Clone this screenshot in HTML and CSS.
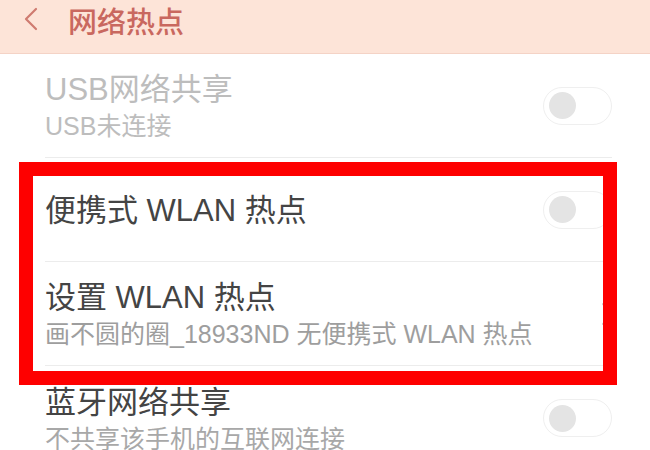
FILE: index.html
```html
<!DOCTYPE html>
<html lang="zh-CN">
<head>
<meta charset="utf-8">
<title>网络热点</title>
<link rel="stylesheet" href="styles.css">
</head>
<body>
<div class="screen">
  <header class="topbar">
    <svg class="back" width="18" height="26" viewBox="0 0 18 26" aria-hidden="true">
      <path d="M14 3 L4 13 L14 23" fill="none" stroke="#cf7b70" stroke-width="2.2" stroke-linecap="round" stroke-linejoin="round"/>
    </svg>
    <h1 class="title">网络热点</h1>
  </header>

  <div class="list">
    <div class="row">
      <div class="text">
        <div class="name disabled">USB网络共享</div>
        <div class="sub disabled">USB未连接</div>
      </div>
      <span class="toggle"><span class="knob"></span></span>
    </div>

    <div class="row">
      <div class="text">
        <div class="name">便携式 WLAN 热点</div>
      </div>
      <span class="toggle"><span class="knob"></span></span>
    </div>

    <div class="row">
      <div class="text">
        <div class="name">设置 WLAN 热点</div>
        <div class="sub">画不圆的圈_18933ND 无便携式 WLAN 热点</div>
      </div>
      <svg class="arrow" width="14" height="26" viewBox="0 0 14 26" aria-hidden="true">
        <path d="M3 3 L12 13 L3 23" fill="none" stroke="#c8c8c8" stroke-width="2" stroke-linecap="round" stroke-linejoin="round"/>
      </svg>
    </div>

    <div class="row last">
      <div class="text">
        <div class="name">蓝牙网络共享</div>
        <div class="sub light">不共享该手机的互联网连接</div>
      </div>
      <span class="toggle"><span class="knob"></span></span>
    </div>
  </div>

  <div class="highlight"></div>
</div>
</body>
</html>
```

FILE: styles.css
```css
* { box-sizing: border-box; }

html, body {
  margin: 0;
  padding: 0;
  background: #ffffff;
}

body {
  font-family: "Liberation Sans", "Noto Sans CJK SC", sans-serif;
  width: 650px;
  height: 450px;
  overflow: hidden;
}

.screen {
  position: relative;
  width: 650px;
  height: 450px;
  overflow: hidden;
}

.topbar {
  height: 54px;
  background: #fde4d8;
  border-bottom: 1px solid #f4d3c6;
  display: flex;
  align-items: flex-start;
  padding-left: 22px;
}

.back {
  margin-top: 6px;
  flex: none;
}

.title {
  margin: 0 0 0 28px;
  font-size: 29px;
  line-height: 40px;
  font-weight: 500;
  color: #c9685f;
  font-family: "Noto Sans CJK SC", sans-serif;
}

.list {
  display: flex;
  flex-direction: column;
}

.row {
  height: 104px;
  margin-left: 45px;
  margin-right: 38px;
  display: flex;
  align-items: center;
  justify-content: space-between;
  border-bottom: 1px solid #ececec;
}

.row.last { border-bottom: none; }

.text {
  display: flex;
  flex-direction: column;
  padding-top: 2px;
}

.name {
  font-size: 31px;
  line-height: 38px;
  color: #444444;
  white-space: nowrap;
}

.sub {
  font-size: 25px;
  line-height: 31px;
  margin-top: 2px;
  color: #9e9e9e;
  white-space: nowrap;
}

.name.disabled,
.sub.disabled { color: #bdbdbd; }

.sub.light { color: #a8a8a8; }

.toggle {
  flex: none;
  width: 69px;
  height: 38px;
  border-radius: 19px;
  border: 1.5px solid #efefef;
  background: #ffffff;
  display: flex;
  align-items: center;
  padding-left: 5px;
}

.knob {
  width: 27px;
  height: 27px;
  border-radius: 50%;
  background: #e4e4e4;
}

.arrow {
  flex: none;
  margin-right: -2px;
}

.highlight {
  position: absolute;
  left: 19px;
  top: 162px;
  width: 598px;
  height: 223px;
  border: 14px solid #fe0000;
  pointer-events: none;
}
```
